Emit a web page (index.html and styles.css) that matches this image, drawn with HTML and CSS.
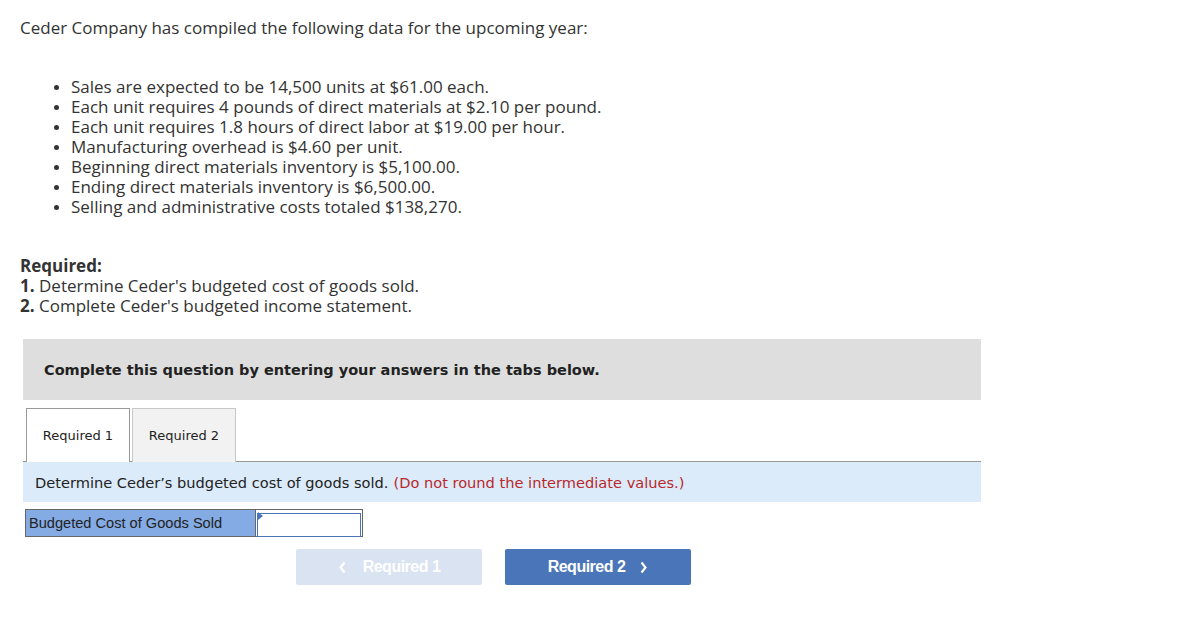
FILE: index.html
```html
<!DOCTYPE html>
<html lang="en">
<head>
    <meta charset="UTF-8">
    <title>Ceder Company</title>
    <link rel="stylesheet" href="styles.css">
</head>
<body>
    <div class="page">
        <p class="intro">Ceder Company has compiled the following data for the upcoming year:</p>
        <ul class="facts">
            <li>Sales are expected to be 14,500 units at $61.00 each.</li>
            <li>Each unit requires 4 pounds of direct materials at $2.10 per pound.</li>
            <li>Each unit requires 1.8 hours of direct labor at $19.00 per hour.</li>
            <li>Manufacturing overhead is $4.60 per unit.</li>
            <li>Beginning direct materials inventory is $5,100.00.</li>
            <li>Ending direct materials inventory is $6,500.00.</li>
            <li>Selling and administrative costs totaled $138,270.</li>
        </ul>
        <div class="required">
            <b>Required:</b><br>
            <b>1.</b> Determine Ceder's budgeted cost of goods sold.<br>
            <b>2.</b> Complete Ceder's budgeted income statement.
        </div>

        <div class="question">
            <div class="banner">Complete this question by entering your answers in the tabs below.</div>
            <div class="tabs">
                <div class="tab active">Required 1</div>
                <div class="tab">Required 2</div>
            </div>
            <div class="instruction">Determine Ceder’s budgeted cost of goods sold. <span class="note">(Do not round the intermediate values.)</span></div>
            <div class="answer">
                <div class="label">Budgeted Cost of Goods Sold</div>
                <div class="cell"><span class="flag"></span><input type="text"></div>
            </div>
            <div class="nav">
                <button class="btn prev">
                    <svg class="chev left" width="9" height="13" viewBox="0 0 9 13"><path d="M6.5 1.5 L2.5 6.5 L6.5 11.5" fill="none" stroke="#fff" stroke-width="2.2"/></svg>
                    Required 1
                </button>
                <button class="btn next">
                    Required 2
                    <svg class="chev right" width="9" height="13" viewBox="0 0 9 13"><path d="M2.5 1.5 L6.5 6.5 L2.5 11.5" fill="none" stroke="#fff" stroke-width="2.2"/></svg>
                </button>
            </div>
        </div>
    </div>
</body>
</html>
```

FILE: styles.css
```css
* {
    margin: 0;
    padding: 0;
    box-sizing: border-box;
}
body {
    background: #fff;
    color: #333;
    font-family: "Open Sans", "Liberation Sans", sans-serif;
    font-size: 17px;
}
.page {
    padding: 18px 0 0 20px;
    width: 981px;
}
.intro {
    line-height: 20px;
}
.facts {
    margin-top: 39px;
    padding-left: 51px;
    line-height: 20px;
}
.facts li::marker {
    font-size: 14px;
}
.required {
    margin-top: 39px;
    line-height: 20px;
}
.question {
    margin-top: 23px;
    margin-left: 3px;
}
.banner {
    height: 61px;
    background: #dedede;
    padding-left: 21px;
    display: flex;
    align-items: center;
    font-family: "DejaVu Sans", Verdana, sans-serif;
    font-weight: bold;
    font-size: 14.5px;
    color: #222;
}
.tabs {
    display: flex;
    gap: 2px;
    margin-top: 8px;
    padding-left: 3px;
    border-bottom: 1px solid #999;
}
.tab {
    width: 104px;
    height: 54px;
    border: 1px solid #c8c8c8;
    border-bottom: none;
    background: #f2f2f2;
    display: flex;
    align-items: center;
    justify-content: center;
    font-family: "DejaVu Sans", Verdana, sans-serif;
    font-size: 13px;
    color: #222;
    margin-bottom: -1px;
}
.tab.active {
    background: #fff;
    border-color: #999;
}
.instruction {
    height: 40px;
    background: #dcebfa;
    padding-left: 12px;
    display: flex;
    align-items: center;
    font-family: "DejaVu Sans", Verdana, sans-serif;
    font-size: 14.6px;
    color: #222;
}
.note {
    color: #b8282b;
    margin-left: 5px;
}
.answer {
    display: flex;
    margin-top: 7px;
    width: 338px;
    height: 28px;
    border: 1px solid #666;
    margin-left: 2px;
}
.label {
    width: 230px;
    background: #85abe4;
    border-right: 1px solid #666;
    font-family: "Liberation Sans", Arial, sans-serif;
    font-size: 14.6px;
    padding-left: 3px;
    display: flex;
    align-items: center;
    color: #222;
}
.cell {
    flex: 1;
    position: relative;
    padding: 1px;
}
.cell input {
    width: 100%;
    height: 100%;
    border: 1px solid #4a76b9;
    outline: none;
}
.flag {
    position: absolute;
    top: 2px;
    left: 2px;
    width: 0;
    height: 0;
    border-top: 4px solid transparent;
    border-bottom: 4px solid transparent;
    border-left: 5px solid #4a76b9;
}
.nav {
    display: flex;
    gap: 23px;
    margin-top: 12px;
    margin-left: 273px;
}
.btn {
    width: 186px;
    height: 36px;
    border: none;
    border-radius: 2px;
    color: #fff;
    font-family: "Liberation Sans", Arial, sans-serif;
    font-weight: bold;
    font-size: 16px;
    letter-spacing: -0.5px;
    display: flex;
    align-items: center;
    justify-content: center;
}
.prev {
    background: #d9e3f2;
}
.next {
    background: #4a76b9;
}
.chev.left {
    margin-right: 16px;
}
.chev.right {
    margin-left: 14px;
}
```
